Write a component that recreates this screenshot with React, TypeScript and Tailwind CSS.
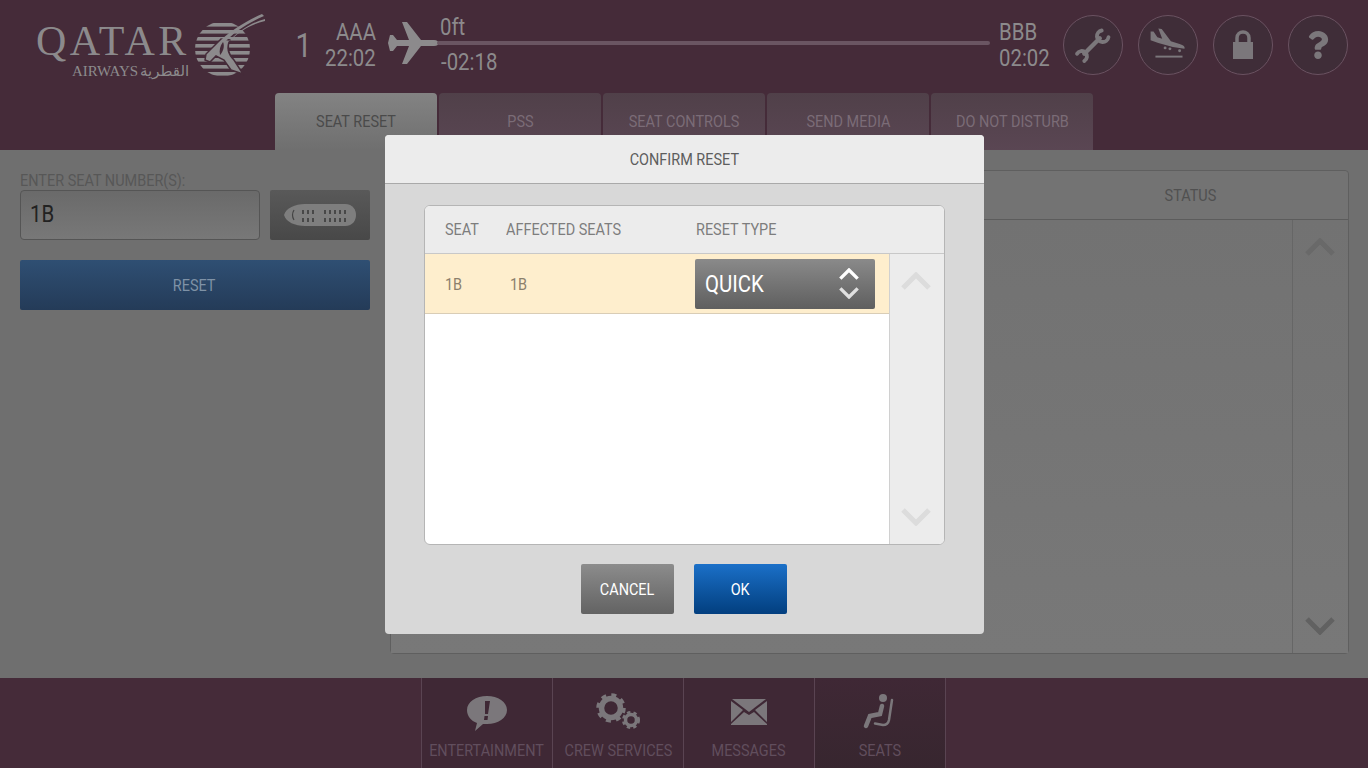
import { FaQuestion } from "react-icons/fa"

const tabs = ["SEAT RESET", "PSS", "SEAT CONTROLS", "SEND MEDIA", "DO NOT DISTURB"]

// Roboto Condensed is not installed, so squeeze Roboto a bit
function Cond({ children, origin = "origin-center" }: { children: React.ReactNode; origin?: string }) {
    return <span className={`inline-block whitespace-nowrap scale-x-[0.85] ${origin}`}>{children}</span>
}

function Emblem() {
    const stripes = [13, 20, 27, 34, 41, 48, 55, 62]
    return (
        <svg className="absolute left-[154px] top-[-2px]" width="80" height="70" viewBox="0 0 80 70" fill="#8c8a8c">
            <defs>
                <clipPath id="globe">
                    <circle cx="32.5" cy="39" r="27.5" />
                </clipPath>
            </defs>
            <g clipPath="url(#globe)">
                {stripes.map((y) => (
                    <rect key={y} x="0" y={y} width="66" height="3.6" />
                ))}
            </g>
            <path
                d="M15 50 L16 44 L31 29 L40 30 C36 38 38 44 44 50 L53 64 L41 60 L34 50 L26 46 L20 52Z"
                stroke="#452b39"
                strokeWidth="1.5"
            />
            <path d="M72 4 L74 6 C58 13 44 22 34 33 L31 30 C42 20 56 11 72 4Z" />
            <path d="M75 9 L75 11 C62 14 50 21 42 29 L38 32 C48 22 60 13 75 9Z" />
            <path d="M33 32 C35 36 33 42 30 45 C29 40 30 36 33 32Z" fill="#452b39" />
        </svg>
    )
}

function Logo() {
    return (
        <div className="relative w-[232px] h-[70px] ml-9 mt-3 shrink-0 text-[#8c8a8c]">
            <span className="absolute left-0 top-[9px] font-['Liberation_Serif',serif] text-[42px] leading-[40px] tracking-[3.4px]">QATAR</span>
            <span className="absolute left-[36px] top-[52px] font-['Liberation_Serif',serif] text-[15px] leading-[14px]">AIRWAYS</span>
            <span className="absolute left-[104px] top-[52px] font-['DejaVu_Sans',sans-serif] text-[15px] leading-[14px]">القطرية</span>
            <Emblem />
        </div>
    )
}

function Plane() {
    return (
        <svg width="52" height="44" viewBox="0 0 52 44" fill="#8c8a8c" className="shrink-0">
            <path d="M1 22 L3 14 L6 14 L10 19 L22 19 L15 1 L20 1 L34 19 L47 19 C50 19 52 21 52 22 C52 23 50 25 47 25 L34 25 L20 43 L15 43 L22 25 L10 25 L6 30 L3 30Z" />
        </svg>
    )
}

function RoundButton({ children }: { children: React.ReactNode }) {
    return (
        <div className="w-[60px] h-[60px] rounded-full border border-[#6a5261] bg-[#3f2d38] flex items-center justify-center text-[#7b777b]">
            {children}
        </div>
    )
}

function Chevron({ down = false, color, w = 30 }: { down?: boolean; color: string; w?: number }) {
    return (
        <svg width={w} height={w * 0.6} viewBox="0 0 30 18" fill="none" stroke={color} strokeWidth="5">
            <path d={down ? "M2 2 L15 15 L28 2" : "M2 16 L15 3 L28 16"} />
        </svg>
    )
}

function FooterTab({ label, icon, active = false }: { label: string; icon: React.ReactNode; active?: boolean }) {
    return (
        <div className={`w-[131px] flex flex-col items-center border-r border-[#5a4452] ${active ? "bg-gradient-to-b from-[#3f2835] to-[#37262f]" : "bg-[#3f2835]"}`}>
            <div className="h-[56px] mt-[8px] flex items-center justify-center text-[#7b777b]">{icon}</div>
            <span className="text-[17px] leading-[20px] text-[#614e5d] mt-[-2px]"><Cond>{label}</Cond></span>
        </div>
    )
}

export default function App() {
    return (
        <div className="relative w-[1368px] h-[768px] overflow-hidden flex flex-col bg-[#6f6f6f] font-['Roboto',sans-serif]">
            <header className="h-[150px] shrink-0 bg-[#452b39] flex flex-col">
                <div className="h-[93px] flex shrink-0">
                    <Logo />
                    <span className="ml-[26px] mt-[27px] text-[34px] leading-[36px] text-[#8c8a8c]"><Cond>1</Cond></span>
                    <div className="ml-[3px] w-[60px] mt-[19px] flex flex-col items-end text-[24px] leading-[26px] text-[#8c8a8c]">
                        <Cond origin="origin-right">AAA</Cond>
                        <Cond origin="origin-right">22:02</Cond>
                    </div>
                    <div className="ml-[11px] mt-[21px]"><Plane /></div>
                    <div className="w-[553px] -ml-[2px] mt-[12px] flex flex-col shrink-0 text-[24px] leading-[30px] text-[#8c8a8c]">
                        <span className="ml-[3px]"><Cond origin="origin-left">0ft</Cond></span>
                        <div className="h-[4px] -mt-[1px] rounded-full bg-[#6a5562]" />
                        <span className="ml-[4px] mt-[2px]"><Cond origin="origin-left">-02:18</Cond></span>
                    </div>
                    <div className="ml-[9px] mt-[19px] w-[50px] flex flex-col text-[24px] leading-[26px] text-[#8c8a8c]">
                        <Cond origin="origin-left">BBB</Cond>
                        <Cond origin="origin-left">02:02</Cond>
                    </div>
                    <div className="ml-[14px] mt-[15px] flex gap-[15px]">
                        <RoundButton>
                            <svg width="60" height="60" viewBox="0 0 60 60" fill="none" stroke="currentColor" strokeLinecap="round">
                                <path d="M21 39 L37 23" strokeWidth="4.5" />
                                <path d="M39 15 A6 6 0 1 0 46 22" strokeWidth="4" />
                                <path d="M13.5 39 A5.5 5.5 0 1 1 21 46.5" strokeWidth="4" />
                            </svg>
                        </RoundButton>
                        <RoundButton>
                            <svg width="60" height="60" viewBox="0 0 60 60" fill="currentColor">
                                <path d="M12 16 L15 16 L19 22 L24 23.5 L20 13 L23.5 13.5 L33 26 L42 29 C46 30 48 32 47 34 L35 32 L20 28 L12 25Z" />
                                <circle cx="27" cy="33" r="1.5" />
                                <circle cx="32" cy="34" r="1.5" />
                                <circle cx="42" cy="36" r="1.5" />
                                <rect x="17" y="41" width="28" height="2" />
                            </svg>
                        </RoundButton>
                        <RoundButton>
                            <svg width="24" height="30" viewBox="0 0 24 30" fill="currentColor">
                                <path d="M2 12 L22 12 L22 29 L2 29Z" />
                                <path d="M6 13 L6 8 C6 4 9 2 12 2 C15 2 18 4 18 8 L18 13" fill="none" stroke="currentColor" strokeWidth="3.5" />
                            </svg>
                        </RoundButton>
                        <RoundButton><FaQuestion size={28} /></RoundButton>
                    </div>
                </div>
                <nav className="h-[57px] ml-[275px] flex gap-[2px]">
                    {tabs.map((t, i) => (
                        <div
                            key={t}
                            className={`w-[162px] pt-[18px] text-center rounded-t-[4px] text-[17px] leading-[20px] ${i === 0 ? "bg-gradient-to-b from-[#838383] to-[#6f6f6f] text-[#4a4a4a]" : "bg-gradient-to-b from-[#504049] to-[#5a4653] text-[#7b6c77]"}`}
                        >
                            <Cond>{t}</Cond>
                        </div>
                    ))}
                </nav>
            </header>

            <main className="flex-1 flex pl-[20px] pt-[20px] pr-[19px] pb-[24px] gap-[20px] bg-[#6f6f6f]">
                <section className="w-[350px] shrink-0">
                    <div className="h-[20px] text-[17px] leading-[20px] text-[#575757]"><Cond origin="origin-left">ENTER SEAT NUMBER(S):</Cond></div>
                    <div className="flex gap-[10px]">
                        <div className="w-[240px] h-[50px] pl-[9px] rounded-[4px] border border-[#555] bg-gradient-to-b from-[#6a6a6a] to-[#787878] text-[24px] leading-[46px] text-[#222]">
                            <Cond origin="origin-left">1B</Cond>
                        </div>
                        <div className="w-[100px] h-[50px] rounded-[2px] bg-gradient-to-b from-[#595959] to-[#484848] flex items-center justify-center">
                            <svg width="74" height="24" viewBox="0 0 74 24">
                                <path d="M1 12 C3 5 12 1 22 1 L62 1 C70 1 73 7 73 12 C73 17 70 23 62 23 L22 23 C12 23 3 19 1 12Z" fill="#7e7e7e" />
                                <path d="M11 7 Q8 12 11 17" stroke="#444" strokeWidth="1.2" fill="none" />
                                {[19, 24, 29, 41, 46, 51, 56, 61].flatMap((x) => [7, 15].map((y) => (
                                    <rect key={`${x}-${y}`} x={x} y={y} width="2" height="4" fill="#484848" />
                                )))}
                            </svg>
                        </div>
                    </div>
                    <div className="mt-[20px] h-[50px] pr-[2px] rounded-[2px] bg-gradient-to-b from-[#2f4f73] to-[#243b58] text-center text-[17px] leading-[50px] text-[#7f92a6]">
                        <Cond>RESET</Cond>
                    </div>
                </section>
                <section className="flex-1 rounded-[4px] border border-[#5f5f5f] flex flex-col">
                    <div className="h-[49px] shrink-0 border-b border-[#5c5c5c] bg-[#737373] rounded-t-[4px] pl-[769px] w-full text-[17px] leading-[48px] text-[#505050]">
                        <Cond>STATUS</Cond>
                    </div>
                    <div className="flex-1 flex justify-end bg-gradient-to-b from-[#727272] to-[#787878]">
                        <div className="w-[56px] pr-[2px] border-l border-[#666] flex flex-col items-center justify-between py-[18px]">
                            <Chevron color="#696969" />
                            <Chevron color="#616161" down />
                        </div>
                    </div>
                </section>
            </main>

            <footer className="h-[90px] shrink-0 bg-[#452b39] flex pl-[421px]">
                <div className="flex border-l border-[#5a4452]">
                    <FooterTab
                        label="ENTERTAINMENT"
                        icon={
                            <svg width="40" height="36" viewBox="0 0 40 36" fill="currentColor">
                                <path d="M20 0 C31 0 40 6 40 14 C40 22 31 28 20 28 L16 28 L8 35 L10 27 C4 25 0 20 0 14 C0 6 9 0 20 0Z" />
                                <path d="M18 5 L23 5 L21 18 L18 18Z M17.5 20 L21 20 L20.5 24 L17 24Z" fill="#3f2835" />
                            </svg>
                        }
                    />
                    <FooterTab
                        label="CREW SERVICES"
                        icon={
                            <svg width="60" height="50" viewBox="-2 4 60 50" fill="none" stroke="currentColor">
                                <circle cx="21" cy="23" r="9.5" strokeWidth="5.5" />
                                <circle cx="21" cy="23" r="13" strokeWidth="3.5" strokeDasharray="5 5.2" />
                                <circle cx="41" cy="35" r="5.5" strokeWidth="3.5" />
                                <circle cx="41" cy="35" r="7.8" strokeWidth="2.5" strokeDasharray="3.4 3.1" />
                            </svg>
                        }
                    />
                    <FooterTab
                        label="MESSAGES"
                        icon={
                            <svg width="36" height="27" viewBox="0 0 36 27" fill="currentColor" className="-mt-[5px]">
                                <path d="M1 1 L35 1 L18 14Z" />
                                <path d="M0 3 L12 12 L0 24Z M36 3 L24 12 L36 24Z" />
                                <path d="M0 27 L0 26 L13 14 L18 17 L23 14 L36 26 L36 27Z" />
                            </svg>
                        }
                    />
                    <FooterTab
                        label="SEATS"
                        active
                        icon={
                            <svg width="50" height="45" viewBox="0 2 50 45" fill="none" stroke="currentColor" strokeLinecap="round">
                                <circle cx="28" cy="8" r="4" fill="currentColor" stroke="none" />
                                <path d="M27 16 L25 24 L15 26 L11 36" strokeWidth="4.5" />
                                <path d="M37 10 L34 30 Q33 35 28 35 L20 33.5" strokeWidth="2.5" />
                            </svg>
                        }
                    />
                </div>
            </footer>

            {/* Confirm dialog over the dimmed page */}
            <div className="absolute left-[385px] top-[135px] w-[599px] h-[499px] rounded-[4px] bg-[#d8d8d8] flex flex-col overflow-hidden">
                <div className="h-[49px] shrink-0 bg-[#ececec] border-b border-[#a9a9a9] text-center text-[17px] leading-[48px] text-[#5d5d5d]">
                    <Cond>CONFIRM RESET</Cond>
                </div>
                <div className="mx-[39px] mt-[21px] h-[340px] rounded-[6px] border border-[#b5b5b5] bg-white flex flex-col overflow-hidden">
                    <div className="h-[48px] shrink-0 bg-[#ececec] border-b border-[#c8c8c8] flex text-[17px] leading-[47px] text-[#7d7d7d]">
                        <span className="ml-[20px] w-[61px]"><Cond origin="origin-left">SEAT</Cond></span>
                        <span className="w-[190px]"><Cond origin="origin-left">AFFECTED SEATS</Cond></span>
                        <span><Cond origin="origin-left">RESET TYPE</Cond></span>
                    </div>
                    <div className="flex-1 flex">
                        <div className="w-[464px] shrink-0">
                            <div className="h-[60px] bg-[#feeecd] border-b border-[#d9cdb6] flex items-center text-[17px] text-[#8b7f6c]">
                                <span className="ml-[20px] w-[65px] pt-[2px]"><Cond origin="origin-left">1B</Cond></span>
                                <span className="w-[185px] pt-[2px]"><Cond origin="origin-left">1B</Cond></span>
                                <div className="w-[180px] h-[50px] rounded-[2px] bg-gradient-to-b from-[#8a8a8a] to-[#5f5f5f] flex items-center justify-between pl-[10px] pr-[16px] text-[24px] text-white">
                                    <Cond origin="origin-left">QUICK</Cond>
                                    <div className="flex flex-col gap-[7px]">
                                        <Chevron color="#ffffff" w={20} />
                                        <Chevron color="#e0e0e0" w={20} down />
                                    </div>
                                </div>
                            </div>
                        </div>
                        <div className="flex-1 pr-[2px] bg-[#ececec] border-l border-[#d0d0d0] flex flex-col items-center justify-between pt-[18px] pb-[18px]">
                            <Chevron color="#dcdcdc" />
                            <Chevron color="#dcdcdc" down />
                        </div>
                    </div>
                </div>
                <div className="mt-[19px] pr-[1px] flex justify-center gap-[20px] text-[17px] leading-[50px] text-center text-white">
                    <div className="w-[93px] h-[50px] rounded-[2px] bg-gradient-to-b from-[#8c8c8c] to-[#636363]"><Cond>CANCEL</Cond></div>
                    <div className="w-[93px] h-[50px] rounded-[2px] bg-gradient-to-b from-[#1b70c8] to-[#033f7f]"><Cond>OK</Cond></div>
                </div>
            </div>
        </div>
    )
}
